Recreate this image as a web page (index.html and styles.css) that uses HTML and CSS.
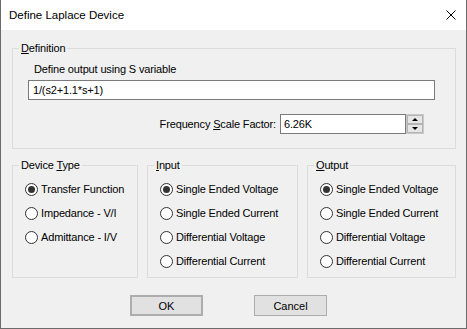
FILE: index.html
```html
<!DOCTYPE html>
<html>
<head>
<meta charset="utf-8">
<link rel="stylesheet" href="styles.css">
</head>
<body>
<div class="window">
  <div class="titlebar">
    <span class="title">Define Laplace Device</span>
    <svg class="close" width="10" height="10" viewBox="0 0 10 10"><path d="M0.5 0.5 L9.5 9.5 M9.5 0.5 L0.5 9.5" stroke="#000" stroke-width="1" fill="none"/></svg>
  </div>
  <div class="body">
    <fieldset class="group def">
      <legend><u>D</u>efinition</legend>
      <div class="def-inner">
        <div class="def-label">Define output using S variable</div>
        <div class="textbox wide">1/(s2+1.1*s+1)</div>
        <div class="freq-row">
          <span class="freq-label">Frequency <u>S</u>cale Factor:</span>
          <div class="textbox freq">6.26K</div>
          <svg class="spinner" width="18" height="20" viewBox="0 0 18 20">
            <rect x="0.5" y="0.5" width="17" height="19" fill="#f0f0f0" stroke="#c8c8c8"/>
            <rect x="1.5" y="1.5" width="15" height="8" fill="#e6e6e6" stroke="#b4b4b4"/>
            <rect x="1.5" y="10.5" width="15" height="8" fill="#e6e6e6" stroke="#b4b4b4"/>
            <polygon points="6,7 12,7 9,4" fill="#000"/>
            <polygon points="6,13 12,13 9,16" fill="#000"/>
          </svg>
        </div>
      </div>
    </fieldset>
    <div class="groups">
      <fieldset class="group g-device">
        <legend>Device <u>T</u>ype</legend>
        <div class="radios">
          <div class="radio-row"><span class="radio on"></span>Transfer Function</div>
          <div class="radio-row"><span class="radio"></span>Impedance - V/I</div>
          <div class="radio-row"><span class="radio"></span>Admittance - I/V</div>
        </div>
      </fieldset>
      <fieldset class="group g-input">
        <legend><u>I</u>nput</legend>
        <div class="radios">
          <div class="radio-row"><span class="radio on"></span>Single Ended Voltage</div>
          <div class="radio-row"><span class="radio"></span>Single Ended Current</div>
          <div class="radio-row"><span class="radio"></span>Differential Voltage</div>
          <div class="radio-row"><span class="radio"></span>Differential Current</div>
        </div>
      </fieldset>
      <fieldset class="group g-output">
        <legend><u>O</u>utput</legend>
        <div class="radios">
          <div class="radio-row"><span class="radio on"></span>Single Ended Voltage</div>
          <div class="radio-row"><span class="radio"></span>Single Ended Current</div>
          <div class="radio-row"><span class="radio"></span>Differential Voltage</div>
          <div class="radio-row"><span class="radio"></span>Differential Current</div>
        </div>
      </fieldset>
    </div>
    <div class="buttons">
      <button class="btn default">OK</button>
      <button class="btn">Cancel</button>
    </div>
  </div>
</div>
</body>
</html>
```
FILE: styles.css
```css
* { box-sizing: border-box; }
body {
  margin: 0;
  font-family: "Liberation Sans", Arial, sans-serif;
  font-size: 11px;
  color: #000;
}
.window {
  width: 467px;
  height: 329px;
  background: #f0f0f0;
  border: 1px solid #6b6b6b;
  border-top: 0;
  display: flex;
  flex-direction: column;
}
.titlebar {
  height: 30px;
  flex: none;
  background: #fff;
  display: flex;
  align-items: center;
  justify-content: space-between;
  padding: 0 10px 0 8px;
}
.title {
  font-size: 11.5px;
}
.close { display: block; }
.body {
  padding: 0 10px 0 11px;
  letter-spacing: -0.15px;
}
.group {
  margin: 0;
  padding: 0;
  border: 1px solid #dcdcdc;
  min-width: 0;
}
.group legend {
  padding: 0 2px;
  margin-left: 6px;
  line-height: 13px;
}
.def {
  margin-top: 12px;
  height: 107px;
}
.def-inner {
  padding: 8px 0 0 15px;
}
.def-label {
  margin-left: 6px;
  line-height: 13px;
}
.textbox {
  height: 20px;
  background: #fff;
  border: 1px solid #7a7a7a;
  line-height: 18px;
  padding-left: 4px;
}
.wide {
  width: 407px;
  margin-top: 4px;
}
.freq-row {
  display: flex;
  justify-content: flex-end;
  align-items: center;
  margin-top: 14px;
  padding-right: 31px;
}
.freq-label { margin-right: 4px; }
.freq {
  width: 126px;
  padding-left: 3px;
}
.spinner { display: block; flex: none; }
.groups {
  display: flex;
  gap: 9px;
  margin-top: 10px;
}
.groups .group { height: 119px; }
.g-device { width: 126px; }
.g-input { width: 151px; }
.g-output { width: 149px; }
.radios {
  padding: 5px 0 0 12px;
}
.radio-row {
  display: flex;
  align-items: center;
  height: 24px;
  white-space: nowrap;
}
.radio {
  width: 13px;
  height: 13px;
  flex: none;
  border-radius: 50%;
  border: 1px solid #333;
  background: #fff;
  margin-right: 3px;
  display: flex;
  align-items: center;
  justify-content: center;
}
.radio.on::after {
  content: "";
  width: 7px;
  height: 7px;
  border-radius: 50%;
  background: #333;
}
.buttons {
  display: flex;
  gap: 51px;
  margin-top: 17px;
  padding-left: 118px;
}
.btn {
  width: 73px;
  height: 21px;
  margin: 0;
  padding: 0;
  font: inherit;
  color: #000;
  background: #e1e1e1;
  border: 1px solid #adadad;
  border-radius: 0;
}
.btn.default { border: 2px solid #adadad; }
```
